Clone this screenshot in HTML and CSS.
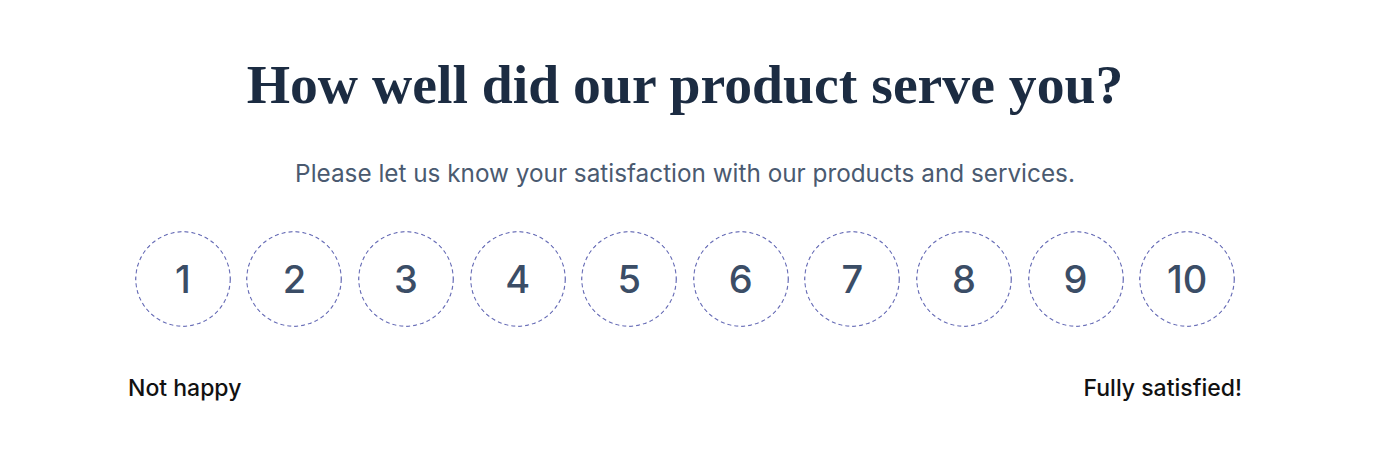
FILE: index.html
```html
<!DOCTYPE html>
<html lang="en">
<head>
    <meta charset="UTF-8">
    <meta name="viewport" content="width=device-width, initial-scale=1.0">
    <title>Product satisfaction</title>
    <link rel="stylesheet" href="styles.css">
</head>
<body>
    <div class="survey">
        <h1 class="survey-title">How well did our product serve you?</h1>
        <p class="survey-subtitle">Please let us know your satisfaction with our products and services.</p>

        <div class="scale">
            <button class="scale-item">1</button>
            <button class="scale-item">2</button>
            <button class="scale-item">3</button>
            <button class="scale-item">4</button>
            <button class="scale-item">5</button>
            <button class="scale-item">6</button>
            <button class="scale-item">7</button>
            <button class="scale-item">8</button>
            <button class="scale-item">9</button>
            <button class="scale-item">10</button>
        </div>

        <div class="scale-labels">
            <span>Not happy</span>
            <span>Fully satisfied!</span>
        </div>
    </div>
</body>
</html>
```

FILE: styles.css
```css
* {
    margin: 0;
    padding: 0;
    box-sizing: border-box;
}

body {
    font-family: Inter, 'Noto Sans', sans-serif;
    background: #fff;
    padding-right: 30px;
}

.survey {
    width: 1114px;
    margin: 0 auto;
    padding-top: 51px;
}

.survey-title {
    font-family: 'Liberation Serif', 'Times New Roman', serif;
    font-size: 55.7px;
    font-weight: bold;
    color: #1c2c42;
    text-align: center;
    line-height: 1.2;
}

.survey-subtitle {
    margin-top: 38px;
    font-size: 24.3px;
    color: #4a5a70;
    text-align: center;
    line-height: 1.4;
}

.scale {
    display: flex;
    justify-content: center;
    gap: 15.6px;
    margin-top: 41px;
}

.scale-item {
    width: 96px;
    height: 96px;
    border: none;
    border-radius: 50%;
    background: #fff url("data:image/svg+xml,%3Csvg xmlns='http://www.w3.org/2000/svg' width='96' height='96'%3E%3Ccircle cx='48' cy='48' r='47.3' fill='none' stroke='%236b70b8' stroke-width='1.3' stroke-dasharray='4 3'/%3E%3C/svg%3E") no-repeat center;
    font-family: Inter, 'Noto Sans', sans-serif;
    font-size: 38px;
    font-weight: 500;
    color: #3b4d66;
    cursor: pointer;
    display: flex;
    align-items: center;
    justify-content: center;
}

.scale-labels {
    display: flex;
    justify-content: space-between;
    margin-top: 47px;
    font-size: 23px;
    font-weight: 500;
    color: #111;
}
```
